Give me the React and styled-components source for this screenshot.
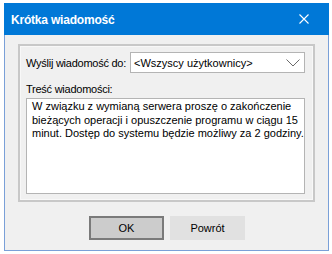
import React from "react";
import styled, { createGlobalStyle } from "styled-components";

const Global = createGlobalStyle`
  html, body { margin: 0; padding: 0; background: #ffffff; }
  body { font-family: "Liberation Sans", Arial, sans-serif; font-size: 11px; color: #000; }
  * { box-sizing: border-box; }
`;

const Page = styled.div`
  padding: 3px 0 0 4px;
`;

const Window = styled.div`
  width: 325px;
  height: 248px;
  border: 1px solid #7aa0d8;
  border-top: none;
  background: #f0f0f0;
  display: flex;
  flex-direction: column;
`;

const TitleBar = styled.div`
  height: 32px;
  margin: 0 -1px;
  background: #0078d7;
  color: #fff;
  display: flex;
  align-items: center;
  justify-content: space-between;
  padding: 0 20px 0 7px;
`;

const Title = styled.span`
  font-weight: bold;
  font-size: 12px;
  letter-spacing: -0.2px;
  padding-top: 1px;
`;

const Close = styled.svg`
  width: 10px;
  height: 10px;
  display: block;
`;

const Body = styled.div`
  flex: 1;
  display: flex;
  flex-direction: column;
  padding: 9px 13px 0 13px;
`;

const Group = styled.div`
  height: 158px;
  border: 2px solid #c8c8c8;
  box-shadow: inset 0 0 0 1px #f8f8f8;
  padding: 6px 8px 6px 6px;
  display: flex;
  flex-direction: column;
`;

const Row = styled.div`
  display: flex;
  align-items: center;
  gap: 4px;
`;

const Label = styled.span`
  white-space: nowrap;
  letter-spacing: -0.25px;
`;

const Combo = styled.div`
  flex: 1;
  height: 21px;
  background: #fff;
  border: 1px solid #b4b4b4;
  display: flex;
  align-items: center;
  justify-content: space-between;
  padding: 0 4px 0 3px;
`;

const Chevron = styled.svg`
  width: 14px;
  height: 8px;
  display: block;
`;

const MsgLabel = styled(Label)`
  margin-top: 10px;
`;

const TextBox = styled.div`
  margin-top: 3px;
  flex: 1;
  background: #fff;
  border: 1px solid #b4b4b4;
  padding: 1px 5px;
  line-height: 13.5px;
  white-space: nowrap;
`;

const Buttons = styled.div`
  display: flex;
  justify-content: center;
  gap: 6px;
  margin-top: 14px;
  padding-left: 1px;
`;

const Button = styled.button`
  width: 75px;
  height: 24px;
  font-family: "Liberation Sans", Arial, sans-serif;
  font-size: 11px;
  color: #000;
  background: ${(p) => (p.$default ? "#cccccc" : "#e1e1e1")};
  border: ${(p) => (p.$default ? "2px solid #7a7a7a" : "1px solid #e1e1e1")};
  padding: 0;
  margin: 0;
`;

export default function App() {
  return (
    <>
      <Global />
      <Page>
        <Window>
          <TitleBar>
            <Title>Krótka wiadomość</Title>
            <Close viewBox="0 0 10 10">
              <path d="M0.5 0.5 L9.5 9.5 M9.5 0.5 L0.5 9.5" stroke="#fff" strokeWidth="1.1" fill="none" />
            </Close>
          </TitleBar>
          <Body>
            <Group>
              <Row>
                <Label>Wyślij wiadomość do:</Label>
                <Combo>
                  <span>&lt;Wszyscy użytkownicy&gt;</span>
                  <Chevron viewBox="0 0 14 8">
                    <path d="M0.5 0.5 L7 7 L13.5 0.5" stroke="#6a6a6a" strokeWidth="1" fill="none" />
                  </Chevron>
                </Combo>
              </Row>
              <MsgLabel>Treść wiadomości:</MsgLabel>
              <TextBox>
                W związku z wymianą serwera proszę o zakończenie
                <br />
                bieżących operacji i opuszczenie programu w ciągu 15
                <br />
                minut. Dostęp do systemu będzie możliwy za 2 godziny.
              </TextBox>
            </Group>
            <Buttons>
              <Button $default>OK</Button>
              <Button>Powrót</Button>
            </Buttons>
          </Body>
        </Window>
      </Page>
    </>
  );
}
